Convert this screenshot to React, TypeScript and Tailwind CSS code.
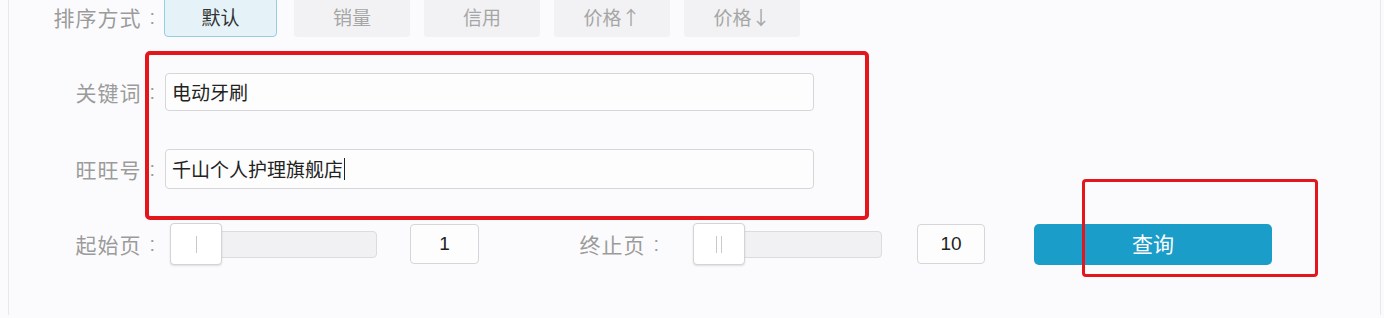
import React from "react";

const FONT = "font-['Noto_Sans_CJK_SC','Noto_Sans',sans-serif]";

function Label({ text, w }: { text: string; w: string }) {
  return (
    <div className={`${w} flex justify-end items-center text-[21px] tracking-[1px] text-[#9b9b9b] leading-none`}>
      <span>{text}</span>
      <span className="ml-[8px] font-['Liberation_Sans',sans-serif] text-[20px]">:</span>
    </div>
  );
}

function SortBtn({ text, active }: { text: string; active?: boolean }) {
  return (
    <div
      className={
        active
          ? "w-[113px] h-[40px] mr-[3px] flex items-center justify-center rounded-[4px] border border-[#95cde2] bg-[#e5f3f9] text-[#333] text-[19px]"
          : "w-[116px] h-[40px] flex items-center justify-center rounded-[3px] bg-[#f2f2f4] text-[#a6a6a6] text-[19px]"
      }
    >
      {text}
    </div>
  );
}

function Slider({ w, lines }: { w: string; lines: number }) {
  return (
    <div className={`${w} relative h-[42px] flex items-center`}>
      <div className="ml-[2px] flex-1 h-[27px] rounded-[4px] border border-[#dcdce0] bg-[#f1f1f3]" />
      <div className="absolute left-0 top-0 w-[52px] h-[42px] rounded-[4px] border border-[#d4d4d8] bg-white shadow-[0_1px_2px_rgba(0,0,0,0.12)] flex items-center justify-center gap-[4px]">
        {Array.from({ length: lines }).map((_, i) => (
          <div key={i} className="w-px h-[17px] bg-[#c9c9cc]" />
        ))}
      </div>
    </div>
  );
}

export default function App() {
  return (
    <div className={`relative w-[1384px] h-[318px] overflow-hidden bg-[#fbfbfd] ${FONT}`}>
      <div className="ml-[8px] mr-[3px] h-full border-l border-r border-[#e8e8ec]">
        {/* sort row */}
        <div className="mt-[-3px] h-[40px] flex items-center">
          <Label text="排序方式" w="w-[147px]" />
          <div className="ml-[8px] flex gap-[14px]">
            <SortBtn text="默认" active />
            <SortBtn text="销量" />
            <SortBtn text="信用" />
            <SortBtn text="价格↑" />
            <SortBtn text="价格↓" />
          </div>
        </div>

        {/* keyword */}
        <div className="mt-[36px] h-[38px] flex items-center">
          <Label text="关键词" w="w-[147px]" />
          <div className="ml-[9px] w-[649px] h-[38px] rounded-[4px] border border-[#d6d6da] bg-[#fdfdfd] flex items-center pl-[6px] text-[19px] text-[#222]">
            电动牙刷
          </div>
        </div>

        {/* wangwang */}
        <div className="mt-[38px] h-[40px] flex items-center">
          <Label text="旺旺号" w="w-[147px]" />
          <div className="ml-[9px] w-[649px] h-[40px] rounded-[4px] border border-[#d6d6da] bg-[#fdfdfd] flex items-center pl-[6px] text-[19px] text-[#222]">
            <span>千山个人护理旗舰店</span>
            <span className="ml-[1px] w-px h-[22px] bg-[#222]" />
          </div>
        </div>

        {/* pages */}
        <div className="mt-[34px] h-[42px] flex items-center">
          <Label text="起始页" w="w-[147px]" />
          <div className="ml-[14px]">
            <Slider w="w-[207px]" lines={1} />
          </div>
          <div className="ml-[33px] w-[69px] h-[40px] rounded-[4px] border border-[#d6d6da] bg-[#fdfdfd] flex items-center justify-center text-[19px] text-[#222] font-['Liberation_Sans',sans-serif]">
            1
          </div>
          <Label text="终止页" w="w-[181px]" />
          <div className="ml-[33px]">
            <Slider w="w-[189px]" lines={2} />
          </div>
          <div className="ml-[35px] w-[68px] h-[40px] rounded-[4px] border border-[#d6d6da] bg-[#fdfdfd] flex items-center justify-center text-[19px] text-[#222] font-['Liberation_Sans',sans-serif]">
            10
          </div>
          <button className="ml-[49px] w-[238px] h-[41px] rounded-[5px] bg-[#1a9dc9] text-white text-[21px] flex items-center justify-center">
            查询
          </button>
        </div>
      </div>

      {/* annotation boxes */}
      <div className="absolute left-[145px] top-[51px] w-[724px] h-[169px] rounded-[5px] border-[4px] border-[#e3161b]" />
      <div className="absolute left-[1082px] top-[179px] w-[236px] h-[98px] rounded-[4px] border-[3px] border-[#e3161b]" />
    </div>
  );
}
